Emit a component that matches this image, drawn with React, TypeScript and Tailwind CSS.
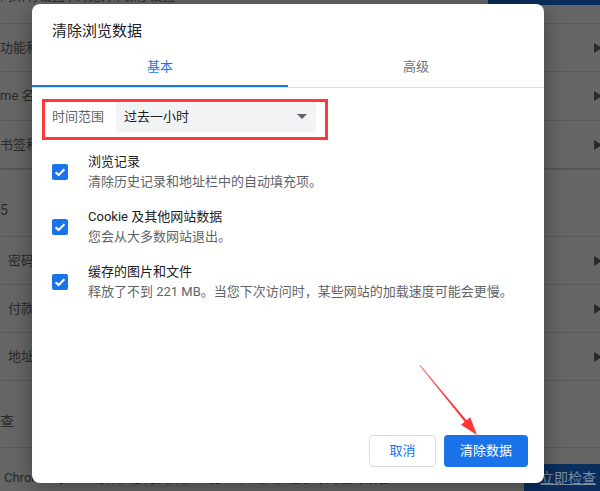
import React from "react";

const font = "font-['Roboto','Noto_Sans_CJK_SC',sans-serif]";

function Arrow() {
  return (
    <svg width="8" height="10" viewBox="0 0 8 10" className="-mr-[2px] shrink-0">
      <polygon points="0,0 8,5 0,10" fill="#2a2a2a" />
    </svg>
  );
}

function Row({ text, h, indent, arrow }: { text: string; h: string; indent?: boolean; arrow?: boolean }) {
  return (
    <div className={`${h} flex items-center justify-between border-b border-[#5b5b5b]`}>
      <span className={`${indent ? "pl-[8px]" : ""} text-[13px] text-[#2a2a2a] leading-[20px]`}>{text}</span>
      {arrow ? <Arrow /> : null}
    </div>
  );
}

function Check() {
  return (
    <div className="w-[16px] h-[16px] rounded-[2px] bg-[#1a73e8] flex items-center justify-center shrink-0">
      <svg width="16" height="16" viewBox="0 0 16 16">
        <path d="M3.6 8.2 L6.6 11 L12.4 5.2" stroke="#fff" strokeWidth="2" fill="none" />
      </svg>
    </div>
  );
}

function Item({ title, desc }: { title: string; desc: string }) {
  return (
    <div className="flex items-center gap-[20px] h-[40px]">
      <Check />
      <div className="flex flex-col">
        <div className="text-[13px] leading-[20px] text-[#202124]">{title}</div>
        <div className="text-[13px] leading-[20px] text-[#5f6368] whitespace-nowrap">{desc}</div>
      </div>
    </div>
  );
}

export default function App() {
  return (
    <div className={`relative w-[600px] h-[491px] overflow-hidden bg-[#666666] ${font}`}>
      {/* Dimmed background page */}
      <div className="flex flex-col -mt-[24px]">
        <div className="h-[48px] flex items-start justify-between border-b border-[#5b5b5b]">
          <span className="pt-[10px] text-[13px] leading-[20px] text-[#2a2a2a] whitespace-nowrap">同所有设置 | 浏览并 | 保存设置 Chrome</span>
          <div className="w-[112px] h-[29px] bg-[#0a2e5d]" />
        </div>
        <Row text="功能和" h="h-[48px]" arrow />
        <Row text="me 名称" h="h-[49px]" arrow />
        <div className="h-[49px] flex items-center justify-between border-b-2 border-[#575757]">
          <span className="text-[13px] text-[#2a2a2a] leading-[20px]">书签和</span>
          <Arrow />
        </div>
        <div className="h-[67px] flex items-end pb-[16px] border-b border-[#5b5b5b]">
          <span className="text-[14px] text-[#2a2a2a] leading-[20px]">5</span>
        </div>
        <Row text="密码" h="h-[48px]" indent arrow />
        <Row text="付款" h="h-[48px]" indent arrow />
        <Row text="地址" h="h-[48px]" indent arrow />
        <div className="h-[67px] flex items-center border-b border-[#5b5b5b]">
          <span className="text-[14px] text-[#2a2a2a] leading-[20px] pt-[14px]">查</span>
        </div>
        <div className="h-[60px] flex items-start justify-between">
          <span className="pt-[20px] pl-[4px] text-[13px] text-[#2a2a2a] leading-[20px] whitespace-nowrap">Chrome 可以帮助保护您免受数据泄露、不良扩展程序等问题的侵害</span>
          <div className="mt-[16px] w-[76px] h-[40px] bg-[#0a2e5d] flex items-start pl-[16px] pt-[4px]">
            <span className="text-[14px] leading-[20px] text-[#7f8a9c] underline whitespace-nowrap">立即检查</span>
          </div>
        </div>
      </div>

      {/* Dialog */}
      <div className="absolute left-[32px] top-[4px] w-[512px] h-[479px] rounded-[8px] bg-white shadow-[0_4px_24px_rgba(0,0,0,0.35)] flex flex-col">
        <div className="h-[44px] pt-[17px] pl-[20px] text-[15px] leading-[20px] text-[#202124]">清除浏览数据</div>
        <div className="flex h-[39px]">
          <div className="flex-1 flex items-center justify-center border-b-2 border-[#1a73e8] text-[13px] text-[#1a73e8]">基本</div>
          <div className="flex-1 flex items-center justify-center border-b-2 border-transparent text-[13px] text-[#6f7378]">高级</div>
        </div>
        <div className="h-px bg-[#dadce0]" />
        <div className="flex items-center pl-[20px] mt-[13px]">
          <span className="w-[64px] text-[13px] leading-[20px] text-[#5f6368]">时间范围</span>
          <div className="w-[200px] h-[31px] rounded-[4px] bg-[#f1f3f4] flex items-center justify-between pl-[8px] pr-[9px]">
            <span className="text-[13px] leading-[20px] text-[#202124]">过去一小时</span>
            <svg width="10" height="5" viewBox="0 0 10 5">
              <polygon points="0,0 10,0 5,5" fill="#5f6368" />
            </svg>
          </div>
        </div>
        <div className="flex flex-col gap-[15px] pl-[20px] mt-[20px]">
          <Item title="浏览记录" desc="清除历史记录和地址栏中的自动填充项。" />
          <Item title="Cookie 及其他网站数据" desc="您会从大多数网站退出。" />
          <Item title="缓存的图片和文件" desc="释放了不到 221 MB。当您下次访问时，某些网站的加载速度可能会更慢。" />
        </div>
        <div className="mt-auto flex justify-end gap-[8px] pr-[16px] pb-[16px]">
          <button className="w-[67px] h-[32px] rounded-[4px] border border-[#dadce0] bg-white text-[13px] text-[#1a73e8]">取消</button>
          <button className="w-[84px] h-[32px] rounded-[4px] bg-[#1a73e8] text-[13px] text-white">清除数据</button>
        </div>
      </div>

      {/* Annotations */}
      <div className="absolute left-[42px] top-[99px] w-[286px] h-[41px] border-[3px] border-[#ff3838]" />
      <svg className="absolute left-0 top-0" width="600" height="491" viewBox="0 0 600 491">
        <polygon
          points="420,365 466.5,420.2 470.3,417.2 477,435 460.9,424.8 464.7,421.8 419.6,365.4"
          fill="#ff3838"
        />
      </svg>
    </div>
  );
}
